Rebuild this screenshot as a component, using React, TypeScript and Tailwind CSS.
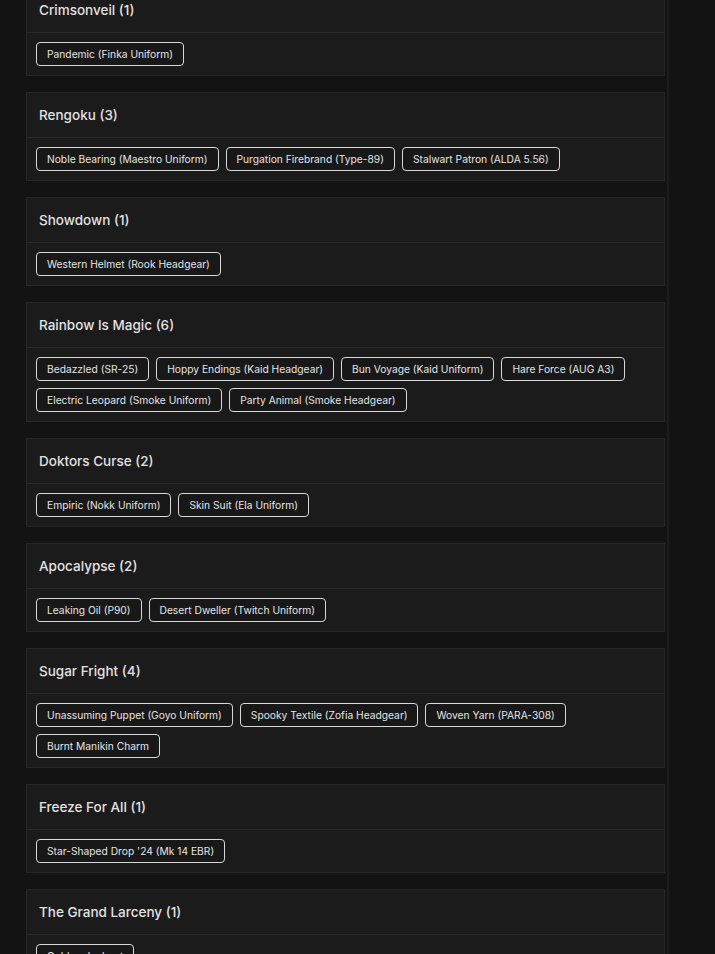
const sets: { name: string; items: string[] }[] = [
  { name: 'Crimsonveil', items: ['Pandemic (Finka Uniform)'] },
  {
    name: 'Rengoku',
    items: ['Noble Bearing (Maestro Uniform)', 'Purgation Firebrand (Type-89)', 'Stalwart Patron (ALDA 5.56)'],
  },
  { name: 'Showdown', items: ['Western Helmet (Rook Headgear)'] },
  {
    name: 'Rainbow Is Magic',
    items: [
      'Bedazzled (SR-25)',
      'Hoppy Endings (Kaid Headgear)',
      'Bun Voyage (Kaid Uniform)',
      'Hare Force (AUG A3)',
      'Electric Leopard (Smoke Uniform)',
      'Party Animal (Smoke Headgear)',
    ],
  },
  { name: 'Doktors Curse', items: ['Empiric (Nokk Uniform)', 'Skin Suit (Ela Uniform)'] },
  { name: 'Apocalypse', items: ['Leaking Oil (P90)', 'Desert Dweller (Twitch Uniform)'] },
  {
    name: 'Sugar Fright',
    items: [
      'Unassuming Puppet (Goyo Uniform)',
      'Spooky Textile (Zofia Headgear)',
      'Woven Yarn (PARA-308)',
      'Burnt Manikin Charm',
    ],
  },
  { name: 'Freeze For All', items: ["Star-Shaped Drop '24 (Mk 14 EBR)"] },
  { name: 'The Grand Larceny', items: ['Golden Jackpot'] },
]

function SetCard({ name, items }: { name: string; items: string[] }) {
  return (
    <div className="mb-4 border border-[#262626] bg-[#1b1b1b]">
      <div className="border-b border-[#2a2a2a] px-3 py-3">
        <h2 className="text-[13.5px] leading-5 font-medium text-[#e2e2e2]">
          {name} ({items.length})
        </h2>
      </div>
      <div className="flex flex-wrap gap-[7px] px-[9px] pt-[9px] pb-[9px]">
        {items.map((item) => (
          <span
            key={item}
            className="h-6 rounded-[4px] border border-[#d8d8d8] bg-[#181818] px-[10px] text-[10.25px] leading-[22px] text-[#e4e4e4]"
          >
            {item}
          </span>
        ))}
      </div>
    </div>
  )
}

export default function App() {
  return (
    <div
      className="h-[954px] overflow-hidden bg-[#131313]"
      style={{ fontFamily: 'Inter, "Open Sans", sans-serif' }}
    >
      <div className="w-[669px] border-r-2 border-[#1c1c1c] pl-[26px] pr-[2px]">
        <div className="-mt-[13px]">
          {sets.map((s) => (
            <SetCard key={s.name} name={s.name} items={s.items} />
          ))}
        </div>
      </div>
    </div>
  )
}
